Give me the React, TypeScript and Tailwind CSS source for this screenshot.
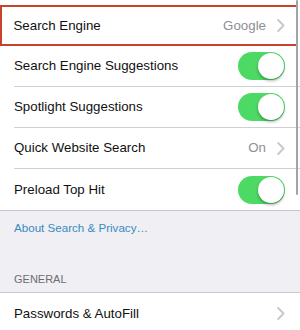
import React from "react";

const Chevron = () => (
  <svg width="8" height="13" viewBox="0 0 8 13" className="shrink-0">
    <path d="M1.2 1 L6.6 6.5 L1.2 12" fill="none" stroke="#c7c7cc" strokeWidth="1.8" strokeLinecap="round" strokeLinejoin="round" />
  </svg>
);

const Toggle = () => (
  <div className="relative w-[47px] h-[28px] rounded-full bg-[#4cd964] shrink-0">
    <div className="absolute right-[1px] top-[1px] w-[26px] h-[26px] rounded-full bg-white shadow-[0_2px_3px_rgba(0,0,0,0.3)]" />
  </div>
);

const Row = ({ label, children, last }: { label: string; children?: React.ReactNode; last?: boolean }) => (
  <div className="pl-[14px] bg-white">
    <div className={`flex items-center h-[41px] pr-[15px] ${last ? "" : "border-b border-[#d0d0d4]"}`}>
      <span className="flex-1 text-[13.3px] text-[#111]">{label}</span>
      {children}
    </div>
  </div>
);

export default function App() {
  return (
    <div
      className="relative w-[300px] h-[330px] overflow-hidden bg-white"
      style={{ fontFamily: '"Liberation Sans", Arial, sans-serif' }}
    >
      <div className="h-[5px]" />
      <div className="mr-[2px] h-[41px] border-[2.5px] border-[#c8432c] flex items-center pl-[11.5px] pr-[11px]">
        <span className="flex-1 text-[13.3px] text-[#111]">Search Engine</span>
        <span className="text-[13.3px] text-[#8e8e93] mr-[11px]">Google</span>
        <Chevron />
      </div>
      <div className="border-b border-[#c8c7cc]">
        <Row label="Search Engine Suggestions">
          <Toggle />
        </Row>
        <Row label="Spotlight Suggestions">
          <Toggle />
        </Row>
        <Row label="Quick Website Search">
          <span className="text-[13.3px] text-[#8e8e93] mr-[11px]">On</span>
          <Chevron />
        </Row>
        <Row label="Preload Top Hit" last>
          <Toggle />
        </Row>
      </div>
      <div className="bg-[#efeff4] h-[82px] border-b border-[#c8c7cc] flex flex-col px-[14px]">
        <div className="pt-[8px] text-[11.6px] text-[#3b8ac2]">About Search &amp; Privacy…</div>
        <div className="mt-auto pb-[5px] text-[11px] text-[#6d6d72]">GENERAL</div>
      </div>
      <Row label="Passwords & AutoFill" last>
        <Chevron />
      </Row>
      <div className="absolute top-0 right-[2px] w-[2.5px] h-[195px] rounded-full bg-[#a3a3a3]" />
    </div>
  );
}
